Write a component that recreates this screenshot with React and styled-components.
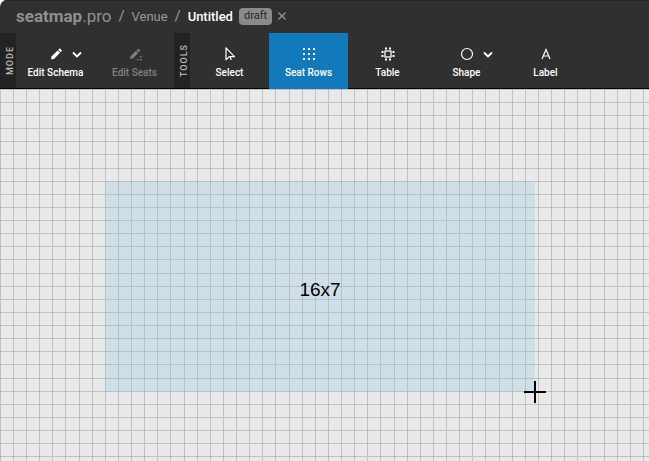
import React from "react";
import styled, { createGlobalStyle } from "styled-components";

const GlobalStyle = createGlobalStyle`
  * {
    box-sizing: border-box;
  }
  body {
    margin: 0;
    background: #fff;
    font-family: Roboto, "Liberation Sans", sans-serif;
  }
`;

const accent = "#1279bb";

const AppWrapper = styled.div`
  display: flex;
  flex-direction: column;
  min-height: 100vh;
  overflow: hidden;
  border-top-left-radius: 7px;
`;

const Header = styled.header`
  display: flex;
  align-items: center;
  height: 33px;
  padding: 0 16px 2px;
  background: #303030;
  border-top: 1px solid #262626;
  color: #999;
  font-size: 13px;
  white-space: nowrap;
`;

const Logo = styled.a`
  color: #8f8f8f;
  font-size: 17px;
  line-height: 20px;
  text-decoration: none;
`;

const LogoName = styled.strong`
  font-weight: 700;
`;

const Slash = styled.span`
  width: 20px;
  text-align: center;
  font-size: 15px;
`;

const Crumb = styled.a`
  color: ${({ $current }) => ($current ? "#fff" : "#999")};
  font-weight: ${({ $current }) => ($current ? 500 : 400)};
  text-decoration: none;
`;

const Badge = styled.span`
  height: 17px;
  margin-left: 6px;
  padding: 0 5px;
  border-radius: 4px;
  background: #8a8a8a;
  color: #262626;
  font-size: 11px;
  line-height: 16px;
`;

const Close = styled.button`
  display: flex;
  margin-left: 5px;
  padding: 0;
  border: none;
  background: none;
  color: #999;
`;

const Toolbar = styled.nav`
  display: flex;
  height: 56px;
  border-bottom: 1px solid #000;
  background: #303030;
`;

const GroupTitle = styled.div`
  display: flex;
  align-items: center;
  justify-content: center;
  width: 16px;
  padding-right: 4px;
  background: #222;
  color: #bbb;
  font-size: 9px;
  font-weight: 500;
  line-height: 12px;
  letter-spacing: 1px;
  writing-mode: vertical-rl;
  transform: rotate(180deg);
`;

const Tool = styled.button`
  display: flex;
  flex-direction: column;
  align-items: center;
  gap: 3px;
  width: 79px;
  margin-bottom: ${({ $active }) => ($active ? "-1px" : "0")};
  padding: 13px 0 0;
  border: none;
  background: ${({ $active }) => ($active ? accent : "none")};
  color: ${({ disabled }) => (disabled ? "#808080" : "#fff")};
  font-family: inherit;
  font-size: 10px;
  font-weight: 500;
  line-height: 16px;
  white-space: nowrap;
`;

const IconRow = styled.span`
  display: grid;
  grid-template-columns: 1fr 16px 1fr;
  align-items: center;
  column-gap: 8px;
  width: 100%;
  height: 16px;
`;

const IconSlot = styled.span`
  display: flex;
  grid-column: 2;
`;

const Canvas = styled.main`
  position: relative;
  flex: 1;
  background: #e9e9e9;
  cursor: crosshair;
`;

const GridSvg = styled.svg`
  position: absolute;
  width: 100%;
  height: 100%;
`;

const Selection = styled.div`
  position: absolute;
  left: 105px;
  top: 92px;
  display: flex;
  align-items: center;
  justify-content: center;
  width: 430px;
  height: 211px;
  padding-top: 6px;
  background: rgba(143, 195, 228, 0.28);
  color: #000;
  font-family: "Liberation Sans", Arial, sans-serif;
  font-size: 19px;
`;

const Cursor = styled.svg`
  position: absolute;
  right: -11px;
  bottom: -11px;
`;

const Icon = ({ children, ...rest }) => (
  <svg width="16" height="16" viewBox="0 0 16 16" fill="none" stroke="currentColor" aria-hidden="true" {...rest}>
    {children}
  </svg>
);

const PencilIcon = () => (
  <Icon fill="currentColor" stroke="none">
    <path d="M3 13.500l.7-3.200L9.600 4.400l2.400 2.400L6.200 12.800z" />
    <path d="M10.200 3.800l.9-.9c.4-.4.9-.4 1.300 0l1.100 1.100c.4.4.4.900 0 1.300l-.9.9z" />
  </Icon>
);

const PencilDotsIcon = () => (
  <Icon fill="currentColor" stroke="none">
    <path d="M3 13l.7-3L9 4.700l2.200 2.200L6 12.300z" />
    <path d="M9.600 4.100l.9-.9c.4-.4.9-.4 1.300 0l1 1c.4.4.4.900 0 1.300l-1 .8z" />
    <path d="M13 10h1.500v1.500H13zM10 13h1.500v1.500H10zM13 13h1.500v1.500H13z" />
  </Icon>
);

const SelectIcon = () => (
  <Icon strokeWidth="1.2" strokeLinejoin="round">
    <path d="M4 1.800v12l3.400-3.200h5.100z" />
    <path d="M7.800 10.600l1.600 3.400" />
  </Icon>
);

const dots = [2, 7, 12];

const RowsIcon = () => (
  <Icon fill="currentColor" stroke="none">
    {dots.map((x) =>
      dots.map((y) => (
        <rect key={`${x}-${y}`} x={x} y={y} width="2" height="2" />
      ))
    )}
  </Icon>
);

const TableIcon = () => (
  <Icon>
    <rect x="5" y="5" width="6" height="6" strokeWidth="1.300" />
    <path
      d="M5 1.500h2v2H5zM9 1.500h2v2H9zM5 12.500h2v2H5zM9 12.500h2v2H9zM1.500 5h2v2h-2zM1.500 9h2v2h-2zM12.500 5h2v2h-2zM12.500 9h2v2h-2z"
      fill="currentColor"
      stroke="none"
    />
  </Icon>
);

const CircleIcon = () => (
  <Icon strokeWidth="1.2">
    <circle cx="8" cy="8" r="5.500" />
  </Icon>
);

const LetterIcon = () => (
  <Icon strokeWidth="1.2">
    <path d="M4 13L8 3.500l4 9.500M5.500 10h5" />
  </Icon>
);

const Chevron = () => (
  <Icon width="10" strokeWidth="1.8" viewBox="3 0 10 16">
    <path d="M4 6.500l4 4 4-4" />
  </Icon>
);

const ToolButton = ({ icon, label, active, disabled, menu }) => (
  <Tool type="button" $active={active} disabled={disabled}>
    <IconRow>
      <IconSlot>{icon}</IconSlot>
      {menu && <Chevron />}
    </IconRow>
    {label}
  </Tool>
);

const gridLines = [0, 13, 26, 39, 52, 65, 79, 92];

const Grid = () => (
  <GridSvg aria-hidden="true">
    <defs>
      <pattern id="grid" width="105" height="105" patternUnits="userSpaceOnUse">
        {gridLines.map((n) => (
          <path key={n} d={`M${n} 0h1v105h-1zM0 ${n}h105v1H0z`} fill="#000" fillOpacity="0.17" />
        ))}
      </pattern>
    </defs>
    <rect width="100%" height="100%" fill="url(#grid)" />
  </GridSvg>
);

const App = () => (
  <>
    <GlobalStyle />
    <AppWrapper>
      <Header>
        <Logo href="#">
          <LogoName>seatmap</LogoName>.pro
        </Logo>
        <Slash>/</Slash>
        <Crumb href="#venue">Venue</Crumb>
        <Slash>/</Slash>
        <Crumb href="#untitled" $current>
          Untitled
        </Crumb>
        <Badge>draft</Badge>
        <Close type="button" aria-label="Close">
          <svg width="10" height="10" viewBox="0 0 10 10" stroke="currentColor" strokeWidth="1.2">
            <path d="M1.500 1.500l7 7M8.500 1.500l-7 7" />
          </svg>
        </Close>
      </Header>
      <Toolbar>
        <GroupTitle>MODE</GroupTitle>
        <ToolButton icon={<PencilIcon />} label="Edit Schema" menu />
        <ToolButton icon={<PencilDotsIcon />} label="Edit Seats" disabled />
        <GroupTitle>TOOLS</GroupTitle>
        <ToolButton icon={<SelectIcon />} label="Select" />
        <ToolButton icon={<RowsIcon />} label="Seat Rows" active />
        <ToolButton icon={<TableIcon />} label="Table" />
        <ToolButton icon={<CircleIcon />} label="Shape" menu />
        <ToolButton icon={<LetterIcon />} label="Label" />
      </Toolbar>
      <Canvas>
        <Grid />
        <Selection>
          16x7
          <Cursor width="22" height="22" viewBox="0 0 22 22" stroke="#000" strokeWidth="2">
            <path d="M11 0v22M0 11h22" />
          </Cursor>
        </Selection>
      </Canvas>
    </AppWrapper>
  </>
);

export default App;
